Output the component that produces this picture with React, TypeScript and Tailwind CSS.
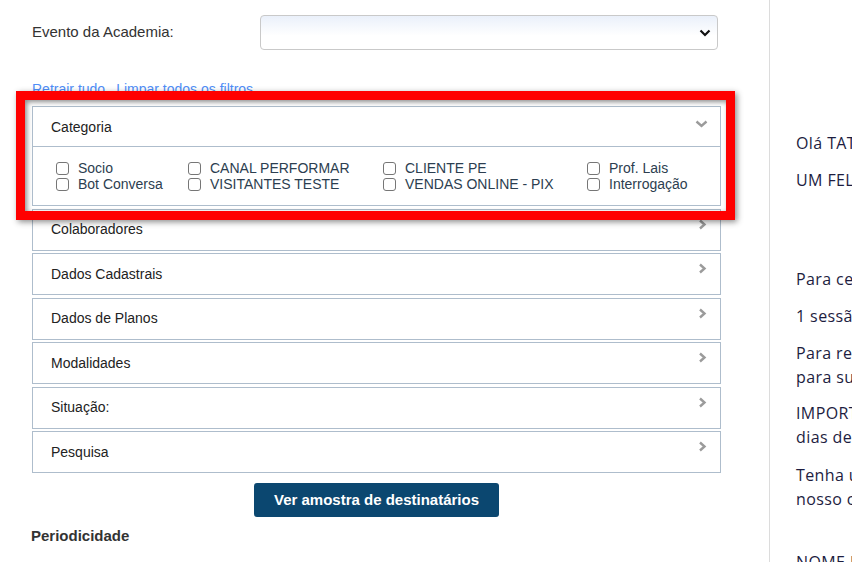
import React from "react";

const categories: string[][] = [
  ["Socio", "Bot Conversa"],
  ["CANAL PERFORMAR", "VISITANTES TESTE"],
  ["CLIENTE PE", "VENDAS ONLINE - PIX"],
  ["Prof. Lais", "Interrogação"],
];

const filters = ["Colaboradores", "Dados Cadastrais", "Dados de Planos", "Modalidades", "Situação:", "Pesquisa"];

function ChevronRight() {
  return (
    <svg width="9" height="11" viewBox="0 0 9 11" className="mt-[9px] shrink-0">
      <path d="M2 1.5 L6.5 5.5 L2 9.5" fill="none" stroke="#9b9b9b" strokeWidth="2.4" />
    </svg>
  );
}

function ChevronDown() {
  return (
    <svg width="13" height="8" viewBox="0 0 13 8" className="mt-[12px] shrink-0">
      <path d="M1.5 1.5 L6.5 6 L11.5 1.5" fill="none" stroke="#9b9b9b" strokeWidth="2.4" />
    </svg>
  );
}

function Checkbox({ label }: { label: string }) {
  return (
    <label className="flex h-4 items-center">
      <span className="h-[13px] w-[13px] shrink-0 rounded-[3px] border border-[#767676] bg-white" />
      <span className="ml-[9px] whitespace-nowrap text-[14px] leading-4 text-[#2c3e50]">{label}</span>
    </label>
  );
}

function FilterPanel({ title }: { title: string }) {
  return (
    <div className="flex h-[42px] justify-between border border-[#aebdcc] bg-white pl-[18px] pr-[13px]">
      <span className="self-center text-[14px] text-[#222]">{title}</span>
      <ChevronRight />
    </div>
  );
}

export default function App() {
  return (
    <div
      className="relative flex h-[562px] w-[852px] overflow-hidden bg-white"
      style={{ fontFamily: '"Liberation Sans", Arial, sans-serif' }}
    >
      {/* left: filter form */}
      <div className="w-[770px] shrink-0 border-r border-[#dcdcdc] pl-[32px] pr-[48px] pt-[15px]">
        <div className="flex h-[35px] items-center">
          <span className="w-[228px] text-[15px] text-[#333]">Evento da Academia:</span>
          <div className="flex h-[35px] w-[458px] items-center justify-end rounded-[4px] border border-[#c9c9c9] bg-gradient-to-b from-[#eaf0fa] to-white to-60% pr-[6px]">
            <svg width="12" height="8" viewBox="0 0 12 8">
              <path d="M1.5 1.5 L6 6 L10.5 1.5" fill="none" stroke="#111" strokeWidth="2.2" />
            </svg>
          </div>
        </div>

        <div className="mt-[30px] flex h-[18px] gap-[11px] text-[14px] leading-[18px] text-[#4f8ef7]">
          <span>Retrair tudo</span>
          <span>Limpar todos os filtros</span>
        </div>

        <div className="mt-[8px] flex flex-col gap-[2.5px]">
          <div className="border border-[#aebdcc] bg-white">
            <div className="flex h-[40px] justify-between border-b border-[#aebdcc] pl-[18px] pr-[12px] pt-px">
              <span className="self-center text-[14px] text-[#222]">Categoria</span>
              <ChevronDown />
            </div>
            <div className="grid grid-cols-[132px_195px_204px_1fr] pb-[13px] pl-[23px] pt-[13px]">
              {categories.map((col) => (
                <div key={col[0]} className="flex flex-col">
                  {col.map((c) => (
                    <Checkbox key={c} label={c} />
                  ))}
                </div>
              ))}
            </div>
          </div>
          {filters.map((f) => (
            <FilterPanel key={f} title={f} />
          ))}
        </div>

        <div className="mt-[10px] flex justify-center">
          <button className="h-[34px] w-[245px] rounded-[3px] bg-[#0b4770] pt-px text-[15px] font-bold text-white">
            Ver amostra de destinatários
          </button>
        </div>

        <div className="-ml-px mt-[10px] text-[15px] font-bold leading-[18px] text-[#333]">Periodicidade</div>
      </div>

      {/* right: message preview */}
      <div
        className="flex-1 overflow-hidden whitespace-nowrap pl-[26px] pt-[131px] text-[16px] leading-[24px] tracking-[0.4px] text-[#1d1d3f]"
        style={{ fontFamily: '"Open Sans", "DejaVu Sans", sans-serif' }}
      >
        <p>Olá TATIANA,</p>
        <p className="mt-[13px]">UM FELIZ ANIVERSÁRIO PARA VOCÊ!</p>
        <p className="mt-[75px]">Para celebrar esta data especial, preparamos um presente:</p>
        <p className="mt-[13px]">1 sessão de avaliação física gratuita!</p>
        <p className="mt-[13px]">
          Para resgatar, apresente esta mensagem na recepção
          <br />
          para sua unidade.
        </p>
        <p className="mt-[12px]">
          IMPORTANTE: o presente é válido por 30
          <br />
          dias desde o envio.
        </p>
        <p className="mt-[14px]">
          Tenha um ótimo dia e conte sempre com o
          <br />
          nosso carinho.
        </p>
        <p className="mt-[39px]">NOME DA ACADEMIA</p>
      </div>

      {/* red highlight annotation */}
      <div className="pointer-events-none absolute left-[16px] top-[91px] h-[129px] w-[719px] border-[9px] border-[#ff0000] shadow-[2px_2px_6px_rgba(0,0,0,0.45),inset_2px_2px_5px_rgba(0,0,0,0.45)]" />
    </div>
  );
}
